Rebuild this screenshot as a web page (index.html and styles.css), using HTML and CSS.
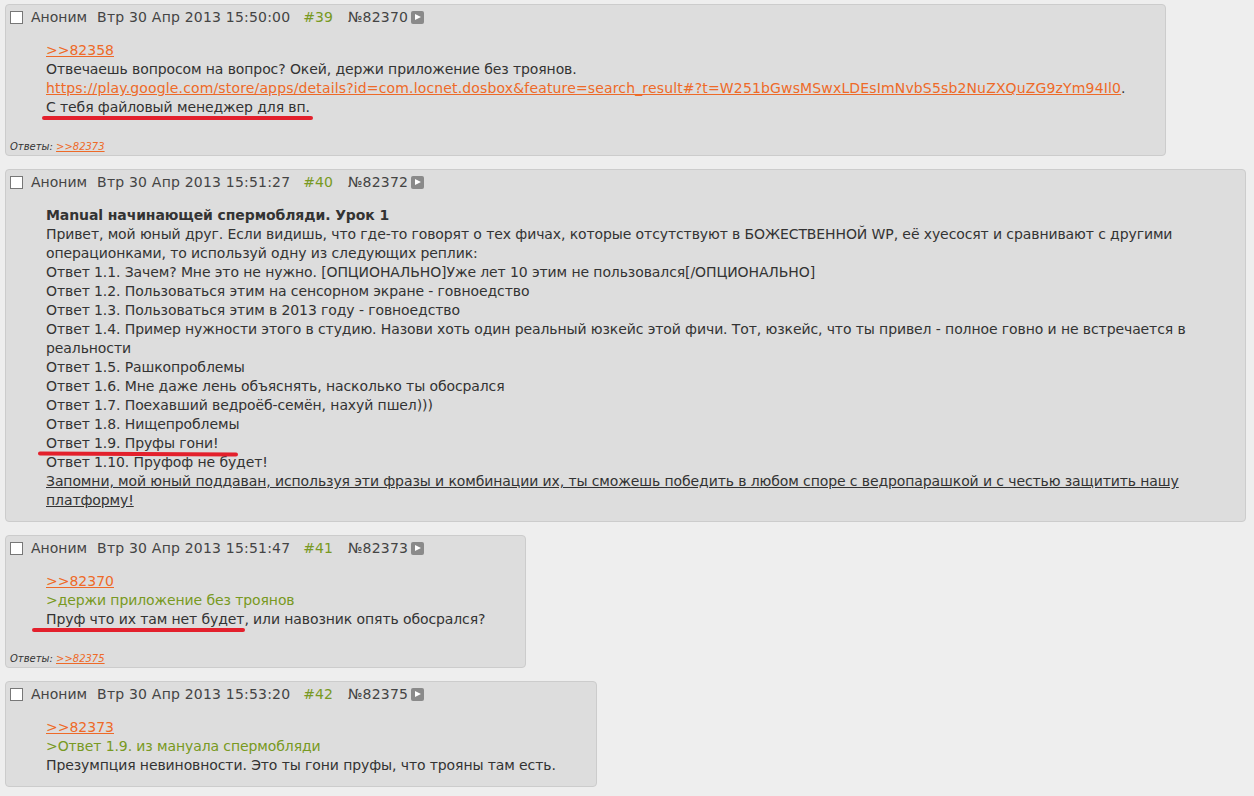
FILE: index.html
```html
<!DOCTYPE html>
<html lang="ru">
<head>
    <meta charset="UTF-8">
    <title>Тред</title>
    <link rel="stylesheet" href="styles.css">
</head>
<body>
    <div class="thread">

        <div class="post">
            <div class="post-head">
                <input type="checkbox" class="post-check">
                <span class="post-name">Аноним</span>
                <span class="post-date">Втр 30 Апр 2013 15:50:00</span>
                <span class="post-pos">#39</span>
                <span class="post-num">№82370</span>
                <span class="post-expand"></span>
            </div>
            <blockquote class="post-body">
                <a href="#" class="ref">&gt;&gt;82358</a><br>
                Отвечаешь вопросом на вопрос? Окей, держи приложение без троянов.<br>
                <a href="#" class="ref ref-url">https://play.google.com/store/apps/details?id=com.locnet.dosbox&amp;feature=search_result#?t=W251bGwsMSwxLDEsImNvbS5sb2NuZXQuZG9zYm94Il0</a>.<br>
                <span class="scribble scribble-a">С тебя файловый менеджер для вп.</span>
            </blockquote>
            <div class="post-replies">Ответы: <a href="#" class="ref">&gt;&gt;82373</a></div>
        </div>

        <div class="post">
            <div class="post-head">
                <input type="checkbox" class="post-check">
                <span class="post-name">Аноним</span>
                <span class="post-date">Втр 30 Апр 2013 15:51:27</span>
                <span class="post-pos">#40</span>
                <span class="post-num">№82372</span>
                <span class="post-expand"></span>
            </div>
            <blockquote class="post-body">
                <b>Manual начинающей спермобляди. Урок 1</b><br>
                Привет, мой юный друг. Если видишь, что где-то говорят о тех фичах, которые отсутствуют в БОЖЕСТВЕННОЙ WP, её хуесосят и сравнивают с другими операционками, то используй одну из следующих реплик:<br>
                Ответ 1.1. Зачем? Мне это не нужно. [ОПЦИОНАЛЬНО]Уже лет 10 этим не пользовался[/ОПЦИОНАЛЬНО]<br>
                Ответ 1.2. Пользоваться этим на сенсорном экране - говноедство<br>
                Ответ 1.3. Пользоваться этим в 2013 году - говноедство<br>
                Ответ 1.4. Пример нужности этого в студию. Назови хоть один реальный юзкейс этой фичи. Тот, юзкейс, что ты привел - полное говно и не встречается в реальности<br>
                Ответ 1.5. Рашкопроблемы<br>
                Ответ 1.6. Мне даже лень объяснять, насколько ты обосрался<br>
                Ответ 1.7. Поехавший ведроёб-семён, нахуй пшел)))<br>
                Ответ 1.8. Нищепроблемы<br>
                <span class="scribble scribble-b">Ответ 1.9. Пруфы гони!</span><br>
                Ответ 1.10. Пруфоф не будет!<br>
                <u>Запомни, мой юный поддаван, используя эти фразы и комбинации их, ты сможешь победить в любом споре с ведропарашкой и с честью защитить нашу платформу!</u>
            </blockquote>
        </div>

        <div class="post">
            <div class="post-head">
                <input type="checkbox" class="post-check">
                <span class="post-name">Аноним</span>
                <span class="post-date">Втр 30 Апр 2013 15:51:47</span>
                <span class="post-pos">#41</span>
                <span class="post-num">№82373</span>
                <span class="post-expand"></span>
            </div>
            <blockquote class="post-body">
                <a href="#" class="ref">&gt;&gt;82370</a><br>
                <span class="quote">&gt;держи приложение без троянов</span><br>
                <span class="scribble scribble-c">Пруф что их там нет будет</span>, или навозник опять обосрался?
            </blockquote>
            <div class="post-replies">Ответы: <a href="#" class="ref">&gt;&gt;82375</a></div>
        </div>

        <div class="post">
            <div class="post-head">
                <input type="checkbox" class="post-check">
                <span class="post-name">Аноним</span>
                <span class="post-date">Втр 30 Апр 2013 15:53:20</span>
                <span class="post-pos">#42</span>
                <span class="post-num">№82375</span>
                <span class="post-expand"></span>
            </div>
            <blockquote class="post-body">
                <a href="#" class="ref">&gt;&gt;82373</a><br>
                <span class="quote">&gt;Ответ 1.9. из мануала спермобляди</span><br>
                Презумпция невиновности. Это ты гони пруфы, что трояны там есть.
            </blockquote>
        </div>

    </div>
</body>
</html>
```

FILE: styles.css
```css
body {
    background-color: #eeeeee;
    color: #333333;
    font-family: "DejaVu Sans", Verdana, sans-serif;
    font-size: 14px;
    margin: 0;
    padding: 4px 8px 0 5px;
    overflow: hidden;
}
.thread {
    display: flex;
    flex-direction: column;
    align-items: flex-start;
    gap: 13px;
}
.post {
    position: relative;
    background-color: #dddddd;
    border: 1px solid #cccccc;
    border-radius: 4px;
    padding: 4px 4px 2px 4px;
    max-width: 100%;
    box-sizing: border-box;
}
.post-head {
    display: flex;
    align-items: center;
    height: 17px;
    line-height: 17px;
    color: #444444;
    white-space: nowrap;
}
.post-check {
    width: 13px;
    height: 13px;
    margin: 0 8px 0 0;
    appearance: none;
    background-color: #ffffff;
    border: 1px solid #777777;
    box-sizing: border-box;
}
.post-name {
    margin-right: 10px;
}
.post-date {
    margin-right: 13px;
    letter-spacing: 0.2px;
}
.post-pos {
    color: #789922;
    margin-right: 15px;
}
.post-num {
    margin-right: 3px;
    letter-spacing: 0.2px;
}
.post-expand {
    position: relative;
    width: 13px;
    height: 13px;
    background-color: #8a8a8a;
    border-radius: 2px;
}
.post-expand::after {
    content: "";
    position: absolute;
    left: 4px;
    top: 3px;
    border-left: 6px solid #ffffff;
    border-top: 3.5px solid transparent;
    border-bottom: 3.5px solid transparent;
}
.post-body {
    margin: 15px 36px 9px 36px;
    line-height: 19px;
    letter-spacing: -0.1px;
}
.ref {
    color: #ee6a28;
    text-decoration: underline;
    letter-spacing: 0;
}
.ref-url {
    letter-spacing: 0.15px;
}
.quote {
    color: #789922;
}
.post-replies {
    margin-top: 23px;
    font-size: 10px;
    font-style: italic;
    line-height: 13px;
    color: #333333;
}
.scribble {
    position: relative;
}
.scribble::after {
    content: "";
    position: absolute;
    top: calc(100% + 1px);
    height: 4px;
    background-color: #e3202c;
    border-radius: 2px;
}
.scribble-a::after {
    left: -4px;
    right: -3px;
}
.scribble-b::after {
    left: -8px;
    right: -19px;
    transform: rotate(0.3deg);
}
.scribble-c::after {
    left: -14px;
    right: -1px;
}
```
